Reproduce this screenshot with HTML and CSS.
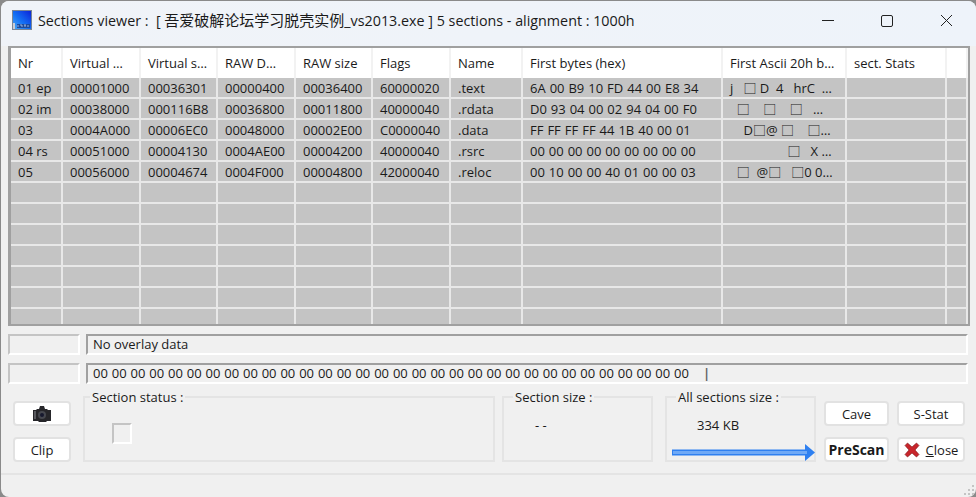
FILE: index.html
```html
<!DOCTYPE html>
<html>
<head>
    <title>Sections viewer</title>
    <link rel="stylesheet" href="styles.css">
</head>
<body>
<div class="window">
    <div class="titlebar">
        <svg class="app-icon" width="20" height="20" viewBox="0 0 20 20">
            <defs>
                <linearGradient id="appBlue" x1="1" y1="0" x2="0" y2="1">
                    <stop offset="0" stop-color="#0c24d8"/>
                    <stop offset="0.55" stop-color="#1470f4"/>
                    <stop offset="1" stop-color="#4aa8f4"/>
                </linearGradient>
            </defs>
            <rect width="20" height="20" fill="#7a8594"/>
            <rect x="1" y="1" width="18" height="18" fill="url(#appBlue)"/>
            <rect x="1" y="13" width="2" height="6" fill="#c8ccd4"/>
            <rect x="5" y="14" width="13" height="4" fill="#1c4a9c"/>
            <path d="M6 15v2M8 15h2v2M12 15h2M13 15v2M16 15v2" stroke="#b8c8e8" stroke-width="0.8" fill="none"/>
        </svg>
        <span class="title-text">Sections viewer :&nbsp; [ <span class="title-cjk">吾爱破解论坛学习脱壳实例</span>_vs2013.exe ] 5 sections - alignment : 1000h</span>
        <div class="controls">
            <svg width="59" height="14" viewBox="0 0 59 14"><path d="M0 6.500h12" stroke="#222" fill="none"/></svg>
            <svg width="59" height="14" viewBox="0 0 59 14"><rect x="0.500" y="1.500" width="11" height="11" rx="1.500" stroke="#222" fill="none"/></svg>
            <svg width="13" height="14" viewBox="0 0 13 14"><path d="M1 1l11 11M12 1L1 12" stroke="#222" fill="none"/></svg>
        </div>
    </div>

    <div class="content">
        <div class="list-panel">
            <table class="sections">
                <colgroup>
                    <col class="c-nr"><col class="c-78"><col class="c-77"><col class="c-78"><col class="c-77"><col class="c-78">
                    <col class="c-name"><col class="c-hex"><col class="c-ascii"><col class="c-stats"><col>
                </colgroup>
                <thead>
                    <tr><th>Nr</th><th>Virtual …</th><th>Virtual s…</th><th>RAW D…</th><th>RAW size</th><th>Flags</th><th>Name</th><th>First bytes (hex)</th><th>First Ascii 20h b…</th><th>sect. Stats</th><th></th></tr>
                </thead>
                <tbody>
                    <tr><td>01 ep</td><td>00001000</td><td>00036301</td><td>00000400</td><td>00036400</td><td>60000020</td><td>.text</td><td class="hex">6A 00 B9 10 FD 44 00 E8 34</td><td class="ascii">j   □ D  4   hrC  …</td><td></td><td></td></tr>
                    <tr><td>02 im</td><td>00038000</td><td>000116B8</td><td>00036800</td><td>00011800</td><td>40000040</td><td>.rdata</td><td class="hex">D0 93 04 00 02 94 04 00 F0</td><td class="ascii">  □    □    □   …</td><td></td><td></td></tr>
                    <tr><td>03</td><td>0004A000</td><td>00006EC0</td><td>00048000</td><td>00002E00</td><td>C0000040</td><td>.data</td><td class="hex">FF FF FF FF 44 1B 40 00 01</td><td class="ascii">    D□@ □    □…</td><td></td><td></td></tr>
                    <tr><td>04 rs</td><td>00051000</td><td>00004130</td><td>0004AE00</td><td>00004200</td><td>40000040</td><td>.rsrc</td><td class="hex">00 00 00 00 00 00 00 00 00</td><td class="ascii">                 □   X …</td><td></td><td></td></tr>
                    <tr><td>05</td><td>00056000</td><td>00004674</td><td>0004F000</td><td>00004800</td><td>42000040</td><td>.reloc</td><td class="hex">00 10 00 00 40 01 00 00 03</td><td class="ascii">  □  @□   □0 0…</td><td></td><td></td></tr>
                    <tr><td></td><td></td><td></td><td></td><td></td><td></td><td></td><td></td><td></td><td></td><td></td></tr>
                    <tr><td></td><td></td><td></td><td></td><td></td><td></td><td></td><td></td><td></td><td></td><td></td></tr>
                    <tr><td></td><td></td><td></td><td></td><td></td><td></td><td></td><td></td><td></td><td></td><td></td></tr>
                    <tr><td></td><td></td><td></td><td></td><td></td><td></td><td></td><td></td><td></td><td></td><td></td></tr>
                    <tr><td></td><td></td><td></td><td></td><td></td><td></td><td></td><td></td><td></td><td></td><td></td></tr>
                    <tr><td></td><td></td><td></td><td></td><td></td><td></td><td></td><td></td><td></td><td></td><td></td></tr>
                    <tr><td></td><td></td><td></td><td></td><td></td><td></td><td></td><td></td><td></td><td></td><td></td></tr>
                </tbody>
            </table>
        </div>

        <div class="status-row">
            <div class="sunken small-box"></div>
            <div class="sunken wide-box">No overlay data</div>
        </div>
        <div class="status-row">
            <div class="sunken small-box"></div>
            <div class="sunken wide-box hex-line">00 00 00 00 00 00 00 00 00 00 00 00 00 00 00 00 00 00 00 00 00 00 00 00 00 00 00 00 00 00 00 00<span class="caret">|</span></div>
        </div>

        <div class="bottom">
            <div class="btn-col">
                <button class="button">
                    <svg width="18" height="16" viewBox="0 0 18 16">
                        <path d="M0 4h3l1-1h2l1-3h4l1 3h2l1 1h3v11h-4l-1 1H6l-1-1H0z" fill="#26262a"/>
                        <circle cx="9" cy="9" r="4" fill="#46484f"/>
                        <circle cx="9" cy="9" r="2" fill="#16182e"/>
                        <rect x="1" y="5" width="2" height="8" fill="#5a5b60"/>
                    </svg>
                </button>
                <button class="button">Clip</button>
            </div>

            <fieldset class="group status-group">
                <legend>Section status :</legend>
                <div class="sunken check"></div>
            </fieldset>
            <fieldset class="group size-group">
                <legend>Section size :</legend>
                <div class="size-value">- -</div>
            </fieldset>
            <fieldset class="group all-group">
                <legend>All sections size :</legend>
                <div class="all-value">334 KB</div>
                <svg class="arrow" width="143" height="17" viewBox="0 0 143 17">
                    <path d="M0 5.500h133V0l10 8.500L133 17v-5.500H0z" fill="#2f80f0"/>
                    <path d="M1 7h134v3H1z" fill="#6fa9f6"/>
                </svg>
            </fieldset>

            <div class="btn-grid">
                <button class="button">Cave</button>
                <button class="button">S-Stat</button>
                <button class="button prescan">PreScan</button>
                <button class="button">
                    <svg class="x-icon" width="16" height="16" viewBox="0 0 16 16">
                        <path d="M1 3.500L3.500 1 8 5 12.500 1 15 3.500 11 8l4 4.500L12.500 15 8 11l-4.500 4L1 12.500 5 8z" fill="#c8262c" stroke="#7c1418" stroke-width="0.6"/>
                    </svg>
                    <span><u>C</u>lose</span>
                </button>
            </div>
        </div>

        <div class="footer">
            <svg class="grip" width="12" height="12" viewBox="0 0 12 12">
                <path d="M9 1h2v2H9zM5 5h2v2H5zM9 5h2v2H9zM1 9h2v2H1zM5 9h2v2H5zM9 9h2v2H9z" fill="#c4c4c4"/>
            </svg>
        </div>
    </div>
</div>
</body>
</html>
```

FILE: styles.css
```css
* {
    box-sizing: border-box;
}

html, body {
    margin: 0;
    padding: 0;
    width: 976px;
    height: 497px;
    overflow: hidden;
    background-color: #8a8a8a;
}

body {
    font-family: "Open Sans", "Noto Sans CJK SC", sans-serif;
    font-size: 13px;
    color: #1a1a1a;
}

.window {
    width: 975px;
    height: 496px;
    margin: 1px 0 0 1px;
    background-color: #f0f0f0;
    border-radius: 8px;
    overflow: hidden;
    display: flex;
    flex-direction: column;
}

.titlebar {
    height: 45px;
    flex: none;
    display: flex;
    align-items: flex-start;
    padding: 9px 23px 0 11px;
    background: linear-gradient(90deg, #f0f3f8, #eef3fa);
}

.app-icon {
    flex: none;
}

.title-text {
    margin-left: 6px;
    font-size: 14.3px;
    line-height: 20px;
    white-space: nowrap;
    flex: 1;
}

.title-cjk {
    font-size: 15px;
}

.controls {
    display: flex;
    align-items: center;
    margin-top: 4px;
}

.content {
    flex: 1;
    padding: 0 6px 0 7px;
    display: flex;
    flex-direction: column;
}

.list-panel {
    height: 280px;
    flex: none;
    border-top: 2px solid #a0a0a0;
    border-left: 3px solid #a0a0a0;
    border-right: 2px solid #a0a0a0;
    border-bottom: 2px solid #a0a0a0;
    background-color: #c4c4c4;
    overflow: hidden;
}

.sections {
    width: 957px;
    table-layout: fixed;
    border-collapse: separate;
    border-spacing: 0;
}

.c-nr { width: 52px; }
.c-78 { width: 78px; }
.c-77 { width: 77px; }
.c-name { width: 72px; }
.c-hex { width: 200px; }
.c-ascii { width: 124px; }
.c-stats { width: 100px; }

.sections th {
    height: 30px;
    padding: 0 0 0 7px;
    background-color: #fff;
    border-right: 2px solid #f2f2f2;
    font-weight: normal;
    text-align: left;
    white-space: nowrap;
    overflow: hidden;
}

.sections td {
    height: 21px;
    padding: 1px 0 0 7px;
    background-color: #c4c4c4;
    border-right: 2px solid #e8e8e8;
    border-bottom: 2px solid #e8e8e8;
    line-height: 18px;
    white-space: nowrap;
    overflow: hidden;
}

.sections td.hex {
    word-spacing: 0.6px;
}

.sections td.ascii {
    white-space: pre;
}

.status-row {
    display: flex;
    gap: 6px;
    margin-top: 8px;
    height: 21px;
    flex: none;
}

.sunken {
    border-top: 2px solid #a0a0a0;
    border-left: 2px solid #a0a0a0;
    border-right: 2px solid #fff;
    border-bottom: 2px solid #fff;
}

.sunken.small-box {
    width: 72px;
    border-top-color: #c4c4c4;
    border-left-color: #c4c4c4;
}

.wide-box {
    width: 882px;
    padding-left: 5px;
    line-height: 17px;
    white-space: nowrap;
    overflow: hidden;
}

.hex-line {
    word-spacing: 0.5px;
}

.caret {
    margin-left: 14px;
    color: #666;
    font-weight: bold;
}

.bottom {
    display: flex;
    margin-top: 6px;
    height: 72px;
    flex: none;
}

.btn-col {
    width: 75px;
    flex: none;
    padding: 11px 0 0 5px;
    display: flex;
    flex-direction: column;
    gap: 11px;
}

.button {
    height: 25px;
    padding: 0;
    font-family: inherit;
    font-size: 13px;
    color: #1a1a1a;
    background-color: #fff;
    border: 2px solid #e2e2e2;
    border-radius: 4px;
    display: flex;
    align-items: center;
    justify-content: center;
}

.btn-col .button {
    width: 58px;
}

.group {
    margin: 0;
    padding: 0;
    min-width: 0;
    height: 72px;
    border: 2px solid #e4e4e4;
    flex: none;
    position: relative;
}

.group legend {
    margin-left: 5px;
    padding: 0 2px;
    font-size: 13px;
    line-height: 14px;
}

.status-group {
    width: 412px;
}

.size-group {
    width: 151px;
    margin-left: 7px;
}

.size-group legend {
    margin-left: 9px;
}

.all-group {
    width: 151px;
    margin-left: 12px;
}

.all-group legend {
    margin-left: 9px;
}

.check {
    width: 20px;
    height: 21px;
    margin: 19px 0 0 27px;
    border-top-color: #c4c4c4;
    border-left-color: #c4c4c4;
}

.size-value {
    margin: 12px 0 0 31px;
}

.all-value {
    margin: 12px 0 0 30px;
}

.arrow {
    position: absolute;
    left: 5px;
    bottom: -1px;
}

.btn-grid {
    margin-left: 8px;
    padding-top: 11px;
    display: grid;
    grid-template-columns: 65px 68px;
    grid-auto-rows: 25px;
    column-gap: 8px;
    row-gap: 11px;
}

.prescan {
    font-size: 14px;
    font-weight: bold;
}

.x-icon {
    margin-right: 6px;
}

.footer {
    flex: 1;
    margin: 11px -6px 0 -7px;
    border-top: 2px solid #e4e4e4;
    position: relative;
}

.grip {
    position: absolute;
    right: 1px;
    bottom: 1px;
}
```
